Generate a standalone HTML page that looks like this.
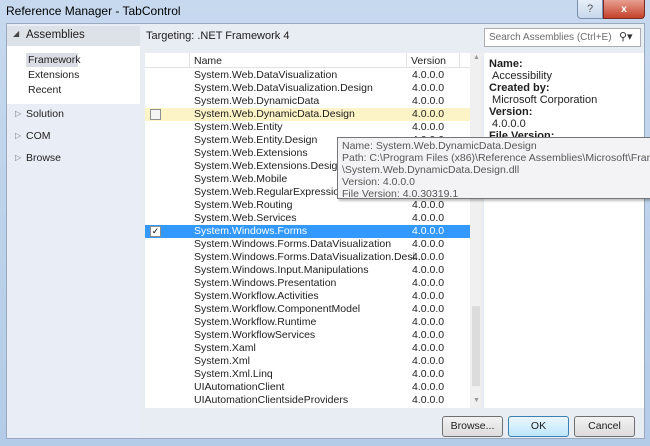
<!DOCTYPE html>
<html><head><style>
*{margin:0;padding:0;box-sizing:border-box}
body{width:650px;height:446px;overflow:hidden;font-family:"Liberation Sans",sans-serif;font-size:10.5px;color:#1e1e1e;background:linear-gradient(#c6d9ef,#b4cce8);position:relative}
.a{position:absolute}
.row{position:absolute;left:0;width:325px;height:13px;line-height:13px}
.row .n{position:absolute;left:49px;white-space:nowrap}
.row .v{position:absolute;left:267px}
.cb{position:absolute;left:5px;top:1px;width:11px;height:11px;border:1px solid #8e8f8f;background:#f4f4f4}
</style></head><body>
<div class="a" style="left:6px;top:4px;font-size:12px;color:#000">Reference Manager - TabControl</div>
<div class="a" style="left:577px;top:0;width:26px;height:19px;border:1px solid #7b8fae;border-top:none;border-radius:0 0 0 4px;background:linear-gradient(#e6eef8,#c8d8ec);text-align:center;font-size:11px;color:#555;line-height:18px">?</div>
<div class="a" style="left:603px;top:0;width:42px;height:19px;border:1px solid #7a2a20;border-top:none;border-radius:0 0 4px 0;background:linear-gradient(#e8a090,#c4412c);text-align:center;color:#fff;font-weight:bold;line-height:18px">x</div>
<div class="a" style="left:6px;top:23px;width:639px;height:416px;background:#e8ecf3;border:1px solid #9aa9bd"></div>
<div class="a" style="left:7px;top:24px;width:133px;height:414px;background:#e9edf5"></div>
<div class="a" style="left:7px;top:26px;width:133px;height:20px;background:#dde1e8"></div>
<div class="a" style="left:13px;top:29px;font-size:8px;color:#444">◢</div>
<div class="a" style="left:26px;top:29px;font-size:11.5px">Assemblies</div>
<div class="a" style="left:7px;top:46px;width:133px;height:58px;background:#fff"></div>
<div class="a" style="left:26px;top:53px;width:52px;height:14px;background:#dadde3"></div>
<div class="a" style="left:28px;top:54px">Framework</div>
<div class="a" style="left:28px;top:69px">Extensions</div>
<div class="a" style="left:28px;top:84px">Recent</div>
<div class="a" style="left:15px;top:109px;font-size:8px;color:#777">▷</div><div class="a" style="left:26px;top:108px">Solution</div>
<div class="a" style="left:15px;top:131px;font-size:8px;color:#777">▷</div><div class="a" style="left:26px;top:130px">COM</div>
<div class="a" style="left:15px;top:153px;font-size:8px;color:#777">▷</div><div class="a" style="left:26px;top:152px">Browse</div>
<div class="a" style="left:146px;top:30px;font-size:11px">Targeting: .NET Framework 4</div>
<div class="a" style="left:484px;top:28px;width:157px;height:19px;background:#fff;border:1px solid #abadb3"></div>
<div class="a" style="left:489px;top:32px;color:#6d6d6d;font-size:10px">Search Assemblies (Ctrl+E)</div>
<div class="a" style="left:619px;top:30px;font-size:11px;color:#333">⚲▾</div>
<div class="a" style="left:145px;top:53px;width:337px;height:355px;background:#fff;overflow:hidden">
 <div class="a" style="left:0;top:0;width:325px;height:15px;border-bottom:1px solid #e3e3e3"></div>
 <div class="a" style="left:44px;top:0;width:1px;height:15px;background:#e3e3e3"></div>
 <div class="a" style="left:261px;top:0;width:1px;height:15px;background:#e3e3e3"></div>
 <div class="a" style="left:314px;top:0;width:1px;height:15px;background:#e3e3e3"></div>
 <div class="a" style="left:49px;top:2px">Name</div>
 <div class="a" style="left:266px;top:2px">Version</div>
 <div class="a" style="left:325px;top:0;width:12px;height:355px;background:#f0f0f0"></div>
 <div class="a" style="left:328px;top:1px;font-size:7px;color:#999">▲</div>
 <div class="a" style="left:328px;top:344px;font-size:7px;color:#999">▼</div>
 <div class="a" style="left:327px;top:253px;width:8px;height:80px;background:#dcdcdc"></div>
 <div id="rows" class="a" style="left:0;top:16px"></div>
</div>
<div class="a" style="left:484px;top:53px;width:160px;height:355px;background:#fff"></div>
<div class="a" style="left:489px;top:58px;line-height:12px;font-size:11px"><b>Name:</b><br>&nbsp;Accessibility<br><b>Created by:</b><br>&nbsp;Microsoft Corporation<br><b>Version:</b><br>&nbsp;4.0.0.0<br><b>File Version:</b></div>
<div class="a" style="left:337px;top:137px;width:320px;height:62px;background:#f3f3f5;border:1px solid #767676;box-shadow:2px 2px 2px rgba(0,0,0,.25);padding:2px 4px;line-height:12px;font-size:10.5px;color:#575757;white-space:nowrap;overflow:hidden">Name: System.Web.DynamicData.Design<br>Path: C:\Program Files (x86)\Reference Assemblies\Microsoft\Framework<br>\System.Web.DynamicData.Design.dll<br>Version: 4.0.0.0<br>File Version: 4.0.30319.1</div>
<div class="a" style="left:442px;top:416px;width:61px;height:21px;border:1px solid #707070;border-radius:3px;background:linear-gradient(#f2f2f2,#dcdcdc);text-align:center;line-height:19px">Browse...</div>
<div class="a" style="left:508px;top:416px;width:61px;height:21px;border:1px solid #3c7fb1;border-radius:3px;background:linear-gradient(#eaf6fd,#bee6fd);text-align:center;line-height:19px">OK</div>
<div class="a" style="left:574px;top:416px;width:61px;height:21px;border:1px solid #707070;border-radius:3px;background:linear-gradient(#f2f2f2,#dcdcdc);text-align:center;line-height:19px">Cancel</div>
<script>
var names=["System.Web.DataVisualization","System.Web.DataVisualization.Design","System.Web.DynamicData","System.Web.DynamicData.Design","System.Web.Entity","System.Web.Entity.Design","System.Web.Extensions","System.Web.Extensions.Design","System.Web.Mobile","System.Web.RegularExpressions","System.Web.Routing","System.Web.Services","System.Windows.Forms","System.Windows.Forms.DataVisualization","System.Windows.Forms.DataVisualization.Desi...","System.Windows.Input.Manipulations","System.Windows.Presentation","System.Workflow.Activities","System.Workflow.ComponentModel","System.Workflow.Runtime","System.WorkflowServices","System.Xaml","System.Xml","System.Xml.Linq","UIAutomationClient","UIAutomationClientsideProviders"];
var h="";names.forEach(function(n,i){var st="top:"+(i*13)+"px;";var cb="";
if(i==3){st+="background:#fcf3c6;";cb='<div class="cb"></div>';}
if(i==12){st+="background:#3399ff;color:#fff;";cb='<div class="cb" style="background:#fff;color:#000;font-size:9px;line-height:9px;text-align:center">✓</div>';}
h+='<div class="row" style="'+st+'">'+cb+'<span class="n">'+n+'</span><span class="v">4.0.0.0</span></div>';});
document.getElementById("rows").innerHTML=h;
</script>
</body></html>
